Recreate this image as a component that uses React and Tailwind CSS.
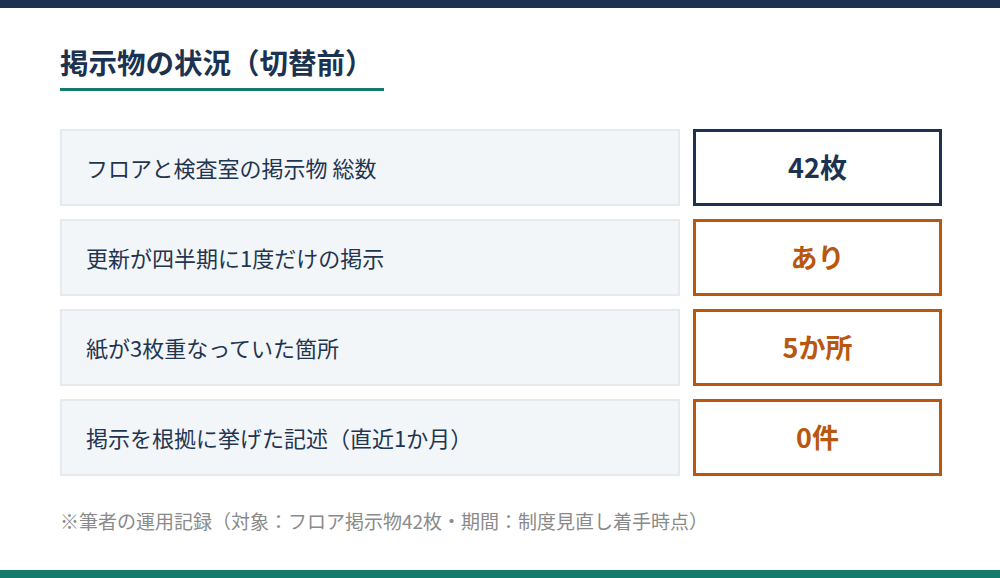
import React from "react";

const rows = [
  { label: "フロアと検査室の掲示物 総数", value: "42枚", tone: "navy" },
  { label: "更新が四半期に1度だけの掲示", value: "あり", tone: "orange" },
  { label: "紙が3枚重なっていた箇所", value: "5か所", tone: "orange" },
  { label: "掲示を根拠に挙げた記述（直近1か月）", value: "0件", tone: "orange" },
];

export default function App() {
  return (
    <div
      className="w-[1000px] h-[578px] bg-white flex flex-col overflow-hidden"
      style={{ fontFamily: '"Noto Sans CJK JP", "Noto Sans", sans-serif' }}
    >
      <div className="h-2 bg-[#1b3350] shrink-0" />
      <div className="flex flex-col pl-[60px] pr-[58px] pt-[34px]">
        <div>
          <h1 className="inline-block text-[28.5px] leading-[40px] font-bold text-[#1b3350] pr-[10px] pb-[6px] border-b-[3px] border-[#137a6c]">
            掲示物の状況（切替前）
          </h1>
        </div>
        <div className="mt-[38px] flex flex-col gap-[13px]">
          {rows.map((r) => (
            <div key={r.label} className="flex gap-[13px] h-[77px]">
              <div className="w-[620px] bg-[#f3f6f9] border-2 border-[#e6e9ed] flex items-center pl-[24px] text-[22px] text-[#1f3550]">
                {r.label}
              </div>
              <div
                className={
                  r.tone === "navy"
                    ? "flex-1 border-[3px] border-[#1b3350] bg-white flex items-center justify-center text-[27px] font-bold text-[#1b3350]"
                    : "flex-1 border-[3px] border-[#b8570d] bg-white flex items-center justify-center text-[27px] font-bold text-[#b8570d]"
                }
              >
                {r.value}
              </div>
            </div>
          ))}
        </div>
        <p className="mt-[33px] text-[19px] leading-[24px] text-[#8a8a8a]">
          ※筆者の運用記録（対象：フロア掲示物42枚・期間：制度見直し着手時点）
        </p>
      </div>
      <div className="mt-auto h-2 bg-[#137a6c] shrink-0" />
    </div>
  );
}
